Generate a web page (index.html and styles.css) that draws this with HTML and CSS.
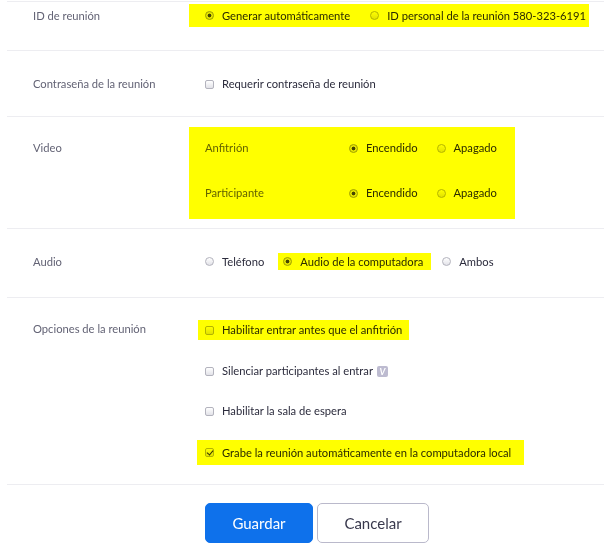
FILE: index.html
```html
<!DOCTYPE html>
<html lang="es">
<head>
<meta charset="utf-8">
<link rel="stylesheet" href="styles.css">
</head>
<body>
<div class="settings">
  <div class="row row-id">
    <div class="label">ID de reunión</div>
    <div class="value">
      <div class="hl hl-id">
        <span class="opt"><span class="radio on"></span>Generar automáticamente</span>
        <span class="opt"><span class="radio"></span>ID personal de la reunión 580-323-6191</span>
      </div>
    </div>
  </div>

  <div class="row row-pass">
    <div class="label">Contraseña de la reunión</div>
    <div class="value">
      <span class="opt"><span class="check"></span>Requerir contraseña de reunión</span>
    </div>
  </div>

  <div class="row row-video">
    <div class="label label-video">Video</div>
    <div class="value">
      <div class="hl hl-video">
        <span class="sublabel">Anfitrión</span>
        <span class="opt"><span class="radio on"></span>Encendido</span>
        <span class="opt"><span class="radio"></span>Apagado</span>
        <span class="sublabel">Participante</span>
        <span class="opt"><span class="radio on"></span>Encendido</span>
        <span class="opt"><span class="radio"></span>Apagado</span>
      </div>
    </div>
  </div>

  <div class="row row-audio">
    <div class="label">Audio</div>
    <div class="value audio">
      <span class="opt"><span class="radio"></span>Teléfono</span>
      <span class="hl hl-audio"><span class="opt"><span class="radio on"></span>Audio de la computadora</span></span>
      <span class="opt"><span class="radio"></span>Ambos</span>
    </div>
  </div>

  <div class="row row-options">
    <div class="label label-options">Opciones de la reunión</div>
    <div class="value options">
      <div class="hl hl-opt1"><span class="opt"><span class="check"></span>Habilitar entrar antes que el anfitrión</span></div>
      <div class="item item-mute"><span class="opt"><span class="check"></span>Silenciar participantes al entrar</span><span class="badge">V</span></div>
      <div class="item item-wait"><span class="opt"><span class="check"></span>Habilitar la sala de espera</span></div>
      <div class="hl hl-opt4"><span class="opt"><span class="check on"></span>Grabe la reunión automáticamente en la computadora local</span></div>
    </div>
  </div>
</div>

<div class="actions">
  <button class="btn btn-primary">Guardar</button>
  <button class="btn btn-default">Cancelar</button>
</div>
</body>
</html>
```

FILE: styles.css
```css
* { box-sizing: border-box; }

body {
  margin: 0;
  background: #fff;
  font-family: Lato, "Open Sans", Arial, sans-serif;
  font-size: 11.2px;
  line-height: 16px;
  color: #2b2b3c;
}

.settings {
  margin-top: 1px;
  margin-left: 7px;
  border-top: 1px solid #ededf1;
}

.row {
  display: flex;
  align-items: center;
  padding-left: 26px;
  border-bottom: 1px solid #ededf1;
}

.label {
  width: 172px;
  flex: none;
  color: #636375;
}

.value {
  display: flex;
  align-items: center;
}

.row-id { padding-top: 2px; padding-bottom: 23px; }
.row-pass { padding-top: 25px; padding-bottom: 24px; }
.row-video { align-items: flex-start; padding-top: 10px; padding-bottom: 9px; }
.row-audio { padding-top: 24px; padding-bottom: 27px; }
.row-options { align-items: flex-start; padding-top: 22px; padding-bottom: 19px; }

.label-video { margin-top: 13px; }
.label-options { margin-top: 1px; }

/* highlighter */
.hl { background: #ffff00; }
.hl > * { mix-blend-mode: multiply; }

.opt {
  display: inline-flex;
  align-items: center;
  white-space: nowrap;
}

.radio {
  width: 9px;
  height: 9px;
  border-radius: 50%;
  border: 1px solid #b3b3bd;
  background: linear-gradient(#ffffff, #e2e2e8);
  margin-right: 8px;
  flex: none;
}
.radio.on {
  border-color: #9d9daa;
  background: radial-gradient(circle, #45454f 0 1.6px, #e6e6ec 2.2px);
}

.check {
  position: relative;
  width: 9px;
  height: 9px;
  border-radius: 2px;
  border: 1px solid #b3b3bd;
  background: linear-gradient(#ffffff, #e2e2e8);
  margin-right: 8px;
  flex: none;
}
.check.on::after {
  content: "";
  position: absolute;
  left: 2px;
  top: 0px;
  width: 3px;
  height: 5px;
  border-right: 1.6px solid #333;
  border-bottom: 1.6px solid #333;
  transform: rotate(40deg);
}

/* ID row */
.hl-id {
  display: flex;
  align-items: center;
  width: 400px;
  height: 23px;
  margin-left: -16px;
  padding-left: 16px;
  gap: 20px;
}

/* Video */
.hl-video {
  display: grid;
  grid-template-columns: 125px auto auto;
  justify-content: start;
  column-gap: 19px;
  row-gap: 29px;
  width: 326px;
  margin-left: -16px;
  padding: 13px 0 18px 16px;
}
.hl-video .sublabel { color: #636375; }

/* Audio */
.audio { gap: 19px; }
.hl-audio {
  display: inline-flex;
  align-items: center;
  height: 17px;
  margin: 0 -8px 0 -5px;
  padding: 0 8px 0 5px;
}

/* Options */
.options {
  flex-direction: column;
  align-items: flex-start;
}
.hl-opt1 {
  display: flex;
  align-items: center;
  height: 20px;
  margin-left: -7px;
  padding: 0 7px;
}
.item { display: flex; align-items: center; height: 16px; }
.item-mute { margin-top: 23px; }
.item-wait { margin-top: 24px; }
.hl-opt4 {
  display: flex;
  align-items: center;
  height: 25px;
  margin-top: 21px;
  margin-left: -8px;
  padding: 0 13px 0 8px;
}

.badge {
  display: inline-flex;
  align-items: center;
  justify-content: center;
  width: 11px;
  height: 11px;
  margin-left: 4px;
  border-radius: 2px;
  background: #bdbbd0;
  color: #fff;
  font-size: 9px;
  font-weight: 700;
  line-height: 11px;
  font-style: italic;
}

/* buttons */
.actions {
  display: flex;
  gap: 4px;
  padding-top: 18px;
  padding-left: 205px;
}
.btn {
  height: 40px;
  border-radius: 5px;
  font-family: Lato, "Open Sans", Arial, sans-serif;
  font-size: 15px;
}
.btn-primary {
  width: 108px;
  border: 1px solid #0e71eb;
  background: #0e71eb;
  color: #fff;
}
.btn-default {
  width: 112px;
  border: 1px solid #bab9cb;
  background: #fff;
  color: #39394d;
}
```
